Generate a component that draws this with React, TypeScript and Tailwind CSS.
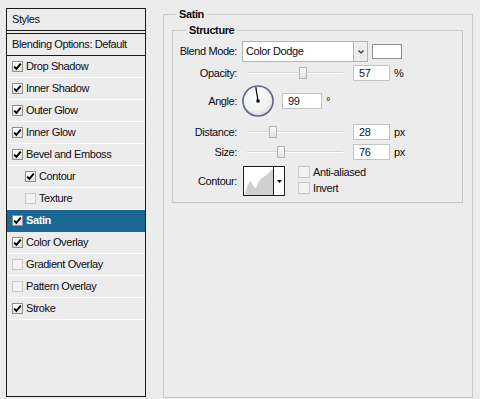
import React from 'react';

type StyleItem = {
  label: string;
  checked: boolean;
  indent?: boolean;
  selected?: boolean;
};

const items: StyleItem[] = [
  { label: 'Drop Shadow', checked: true },
  { label: 'Inner Shadow', checked: true },
  { label: 'Outer Glow', checked: true },
  { label: 'Inner Glow', checked: true },
  { label: 'Bevel and Emboss', checked: true },
  { label: 'Contour', checked: true, indent: true },
  { label: 'Texture', checked: false, indent: true },
  { label: 'Satin', checked: true, selected: true },
  { label: 'Color Overlay', checked: true },
  { label: 'Gradient Overlay', checked: false },
  { label: 'Pattern Overlay', checked: false },
  { label: 'Stroke', checked: true },
];

function CheckBox({ checked, size = 'sm' }: { checked: boolean; size?: 'sm' | 'md' }) {
  const dim = size === 'sm' ? 'w-[11px] h-[11px]' : 'w-[12px] h-[12px]';
  return (
    <span
      className={`${dim} shrink-0 inline-flex items-center justify-center border ${
        checked
          ? 'border-[#8e8e8e] bg-gradient-to-b from-[#ffffff] to-[#e2e2e2]'
          : 'border-[#c9c9c9] bg-[#f1f1f1]'
      }`}
    >
      {checked && (
        <svg width="9" height="9" viewBox="0 0 9 9">
          <path d="M1.2 4.6 L3.4 6.9 L7.8 1.6" fill="none" stroke="#000" strokeWidth="1.9" />
        </svg>
      )}
    </span>
  );
}

// slider track with thumb, thumb offset in px from track start
function Slider({ thumb }: { thumb: number }) {
  return (
    <div className="relative w-[96px] h-[14px] flex items-center">
      <div className="w-full h-[2px] bg-[#d6d6d6] border-b border-white" />
      <div
        className="absolute top-[1px] w-[8px] h-[12px] border border-[#b3b3b3] bg-gradient-to-b from-[#fbfbfb] to-[#e3e3e3]"
        style={{ left: thumb }}
      />
    </div>
  );
}

function NumBox({ value, w = 'w-[37px]' }: { value: string; w?: string }) {
  return (
    <div className={`${w} h-[16px] bg-white border border-[#c3c3c3] pl-[5px] leading-[14px] text-[#10122a]`}>
      {value}
    </div>
  );
}

function Label({ children }: { children: React.ReactNode }) {
  return <div className="w-[64px] shrink-0 text-right">{children}</div>;
}

function Dial({ angle }: { angle: number }) {
  const r = (angle * Math.PI) / 180;
  const x2 = 16 + Math.cos(r) * 14;
  const y2 = 16 - Math.sin(r) * 14;
  return (
    <svg width="32" height="32" viewBox="0 0 32 32">
      <defs>
        <radialGradient id="dialg" cx="45%" cy="40%" r="60%">
          <stop offset="0%" stopColor="#ffffff" />
          <stop offset="70%" stopColor="#f1f1f1" />
          <stop offset="100%" stopColor="#d9d9d9" />
        </radialGradient>
      </defs>
      <circle cx="16" cy="16" r="15" fill="url(#dialg)" stroke="#5a6789" strokeWidth="1.6" />
      <line x1="16" y1="16" x2={x2} y2={y2} stroke="#000" strokeWidth="1.2" />
      <rect x="14.5" y="14.5" width="3" height="3" fill="#000" />
    </svg>
  );
}

function ContourPicker() {
  return (
    <div className="w-[42px] h-[30px] border border-[#1c1c1c] bg-white flex">
      <svg width="29" height="28" viewBox="0 0 29 28" className="shrink-0">
        <path
          d="M1 28 L2 23 L4 17 L6 14 L8 16 L10 20 L12 21 L14 16 L16 13 L17 11 L19 11 L20 9 L22 9 L23 7 L25 6 L26 4 L28 3 L29 2 L29 28 Z"
          fill="#d0d0d0"
        />
      </svg>
      <div className="flex-1 border-l border-[#1c1c1c] flex items-center justify-center">
        <svg width="5" height="3" viewBox="0 0 5 3">
          <path d="M0 0 H5 L2.5 3 Z" fill="#000" />
        </svg>
      </div>
    </div>
  );
}

export default function App() {
  return (
    <div className="w-[480px] h-[399px] overflow-hidden bg-[#ececec] flex font-['Liberation_Sans',Arial,sans-serif] text-[11px] tracking-[-0.4px] text-[#0d0d14]">
      {/* Styles list */}
      <div className="ml-[6px] mt-[8px] w-[140px] h-[389px] border border-[#1a1a1a] bg-[#ececec] flex flex-col shrink-0">
        <div className="h-[22px] border-b border-[#1a1a1a] pl-[5px] leading-[21px]">Styles</div>
        <div className="mt-[2px] h-[23px] border-t border-b border-[#1a1a1a] pl-[5px] leading-[21px]">
          Blending Options: Default
        </div>
        {items.map((it) => (
          <div
            key={it.label}
            className={`h-[22px] border-b flex items-center gap-[3px] ${it.indent ? 'pl-[18px]' : 'pl-[5px]'} ${
              it.selected ? 'bg-[#1b6894] border-[#1b6894] text-white font-bold' : 'border-[#fbfbfb]'
            }`}
          >
            <CheckBox checked={it.checked} />
            <span>{it.label}</span>
          </div>
        ))}
      </div>

      {/* Satin settings */}
      <fieldset className="ml-[17px] mt-[8px] w-[310px] h-[390px] border border-[#c8c8c8] shrink-0">
        <legend className="ml-[12px] px-[3px] font-bold leading-[12px]">Satin</legend>
        <fieldset className="mt-[4px] ml-[8px] w-[291px] border border-[#c8c8c8]">
          <legend className="ml-[13px] px-[3px] font-bold leading-[12px]">Structure</legend>
          <div className="pt-[5px] pb-[6px] flex flex-col">
            <div className="h-[21px] flex items-center">
              <Label>Blend Mode:</Label>
              <div className="ml-[5px] w-[126px] h-[21px] bg-white border border-[#b4b4b4] flex">
                <div className="flex-1 pl-[3px] leading-[19px]">Color Dodge</div>
                <div className="w-[14px] bg-[#ececec] border-l border-[#b4b4b4] flex items-center justify-center">
                  <svg width="6" height="4" viewBox="0 0 6 4">
                    <path d="M0.5 0.5 L3 3 L5.5 0.5" fill="none" stroke="#333" strokeWidth="1.2" />
                  </svg>
                </div>
              </div>
              <div className="ml-[4px] w-[30px] h-[15px] bg-white border border-[#8f8f8f]" />
            </div>

            <div className="mt-[3px] h-[16px] flex items-center">
              <Label>Opacity:</Label>
              <div className="ml-[10px]">
                <Slider thumb={52} />
              </div>
              <div className="ml-[10px]">
                <NumBox value="57" />
              </div>
              <span className="ml-[4px]">%</span>
            </div>

            <div className="mt-[4px] h-[32px] flex items-center">
              <Label>Angle:</Label>
              <div className="ml-[5px] flex">
                <Dial angle={99} />
              </div>
              <div className="ml-[8px]">
                <NumBox value="99" w="w-[40px]" />
              </div>
              <span className="ml-[4px] self-start mt-[8px]">°</span>
            </div>

            <div className="mt-[7px] h-[16px] flex items-center">
              <Label>Distance:</Label>
              <div className="ml-[10px]">
                <Slider thumb={22} />
              </div>
              <div className="ml-[10px]">
                <NumBox value="28" />
              </div>
              <span className="ml-[4px]">px</span>
            </div>

            <div className="mt-[4px] h-[16px] flex items-center">
              <Label>Size:</Label>
              <div className="ml-[10px]">
                <Slider thumb={30} />
              </div>
              <div className="ml-[10px]">
                <NumBox value="76" />
              </div>
              <span className="ml-[4px]">px</span>
            </div>

            <div className="mt-[6px] h-[30px] flex items-center">
              <Label>Contour:</Label>
              <div className="ml-[6px]">
                <ContourPicker />
              </div>
              <div className="ml-[13px] flex flex-col gap-[4px] self-start">
                <div className="flex items-center gap-[3px] leading-[12px]">
                  <CheckBox checked={false} size="md" />
                  <span>Anti-aliased</span>
                </div>
                <div className="flex items-center gap-[3px] leading-[12px]">
                  <CheckBox checked={false} size="md" />
                  <span>Invert</span>
                </div>
              </div>
            </div>
          </div>
        </fieldset>
      </fieldset>
    </div>
  );
}
